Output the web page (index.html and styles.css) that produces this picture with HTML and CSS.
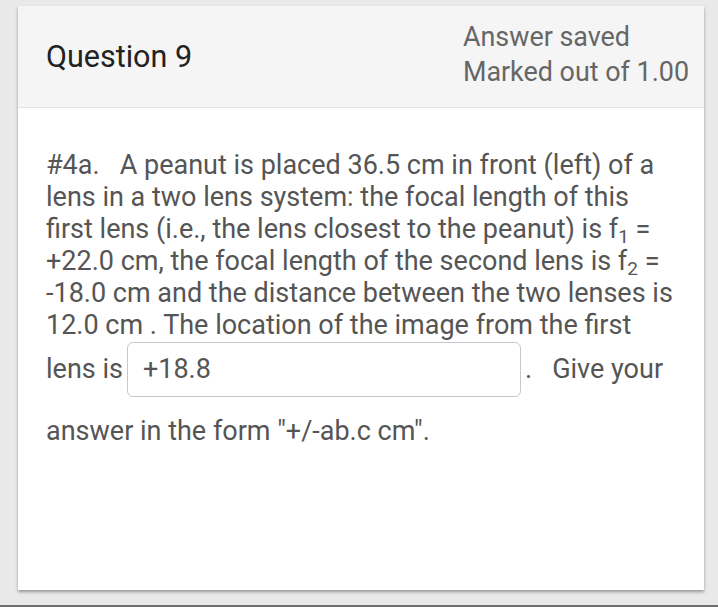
FILE: index.html
```html
<!DOCTYPE html>
<html>
<head>
<meta charset="utf-8">
<link rel="stylesheet" href="styles.css">
</head>
<body>
<div class="page">
  <div class="card">
    <div class="head">
      <div class="qno">Question 9</div>
      <div class="state">
        <div>Answer saved</div>
        <div>Marked out of 1.00</div>
      </div>
    </div>
    <div class="content">
      <p class="qtext">#4a.&nbsp;&nbsp; A peanut is placed 36.5 cm in front (left) of a lens in a two lens system: the focal length of this first lens (i.e., the lens closest to the peanut) is f<sub>1</sub> = +22.0 cm, the focal length of the second lens is f<sub>2</sub> = -18.0 cm and the distance between the two lenses is 12.0 cm . The location of the image from the first lens is<span class="answer">+18.8</span>.&nbsp;&nbsp; Give your answer in the form "+/-ab.c cm".</p>
    </div>
  </div>
  <div class="bottomline"></div>
</div>
</body>
</html>
```
FILE: styles.css
```css
html, body {
  margin: 0;
  padding: 0;
  background: #e9e9e9;
  width: 718px;
  height: 607px;
  overflow: hidden;
}
.page {
  position: relative;
  height: 607px;
  padding: 6px 14px 0 18px;
  box-sizing: border-box;
  font-family: Roboto, "Liberation Sans", sans-serif;
}
.card {
  background: #fff;
  height: 584px;
  box-shadow: 0 2px 3px rgba(0,0,0,0.35);
  display: flex;
  flex-direction: column;
}
.head {
  background: #f5f5f5;
  height: 101px;
  border-bottom: 1px solid #e3e3e3;
  display: flex;
  justify-content: space-between;
  align-items: center;
  padding: 0 15px 0 28px;
}
.qno {
  font-size: 30.5px;
  color: #222;
}
.state {
  font-size: 26.9px;
  color: #666;
  line-height: 35px;
  margin-top: -3px;
}
.content {
  padding: 41px 28px 0 28px;
}
.qtext {
  margin: 0;
  font-size: 27px;
  line-height: 32px;
  color: #555;
}
.qtext sub {
  font-size: 19px;
  line-height: 0;
  vertical-align: -5px;
}
.answer {
  display: inline-block;
  width: 377px;
  height: 53px;
  border: 1px solid #c8c8c8;
  border-radius: 6px;
  margin: 1px 4px 18px 4px;
  padding: 0 0 0 15px;
  line-height: 53px;
  color: #555;
  vertical-align: baseline;
  box-sizing: content-box;
}
.bottomline {
  position: absolute;
  left: 0;
  right: 0;
  bottom: 0;
  height: 2px;
  background: #6e6e6e;
}
```
